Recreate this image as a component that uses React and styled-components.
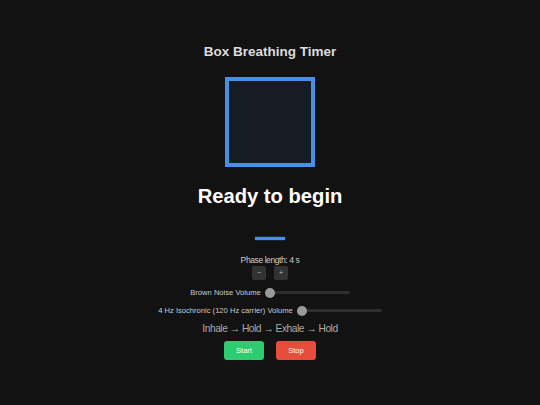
import React, { useState } from "react";
import styled, { createGlobalStyle } from "styled-components";

const Global = createGlobalStyle`
  html, body { margin: 0; padding: 0; background: #121212; }
  body { font-family: "Liberation Sans", Arial, sans-serif; color: #e0e0e0; }
  * { box-sizing: border-box; }
`;

const Page = styled.div`
  width: 540px;
  height: 405px;
  display: flex;
  flex-direction: column;
  align-items: center;
  padding-top: 44px;
`;

const Title = styled.h1`
  margin: 0;
  font-size: 13.5px;
  line-height: 16px;
  font-weight: bold;
  color: #dddddd;
`;

const Box = styled.div`
  margin-top: 17px;
  width: 90px;
  height: 90px;
  border: 4px solid #4a90e2;
  background: #161c24;
`;

const Phase = styled.div`
  margin-top: 16px;
  font-size: 20.2px;
  line-height: 26px;
  font-weight: bold;
  color: #ffffff;
`;

const Bar = styled.div`
  margin-top: 28px;
  width: 30px;
  height: 3px;
  background: #4a90e2;
  box-shadow: 0 0 2px rgba(74, 144, 226, 0.6);
`;

const SmallText = styled.div`
  margin-top: 15px;
  font-size: 8.6px;
  line-height: 10px;
  letter-spacing: -0.45px;
  color: #cccccc;
`;

const StepRow = styled.div`
  margin-top: 1px;
  display: flex;
  gap: 8px;
`;

const StepButton = styled.button`
  width: 14px;
  height: 14px;
  padding: 0;
  border: none;
  border-radius: 2px;
  background: #333333;
  color: #bbbbbb;
  font-family: "Liberation Sans", Arial, sans-serif;
  font-size: 7px;
  line-height: 14px;
  cursor: pointer;
`;

const SliderRow = styled.div`
  margin-top: ${(p) => p.$mt}px;
  display: flex;
  align-items: center;
  gap: 4px;
  font-size: 7.6px;
  color: #cccccc;
`;

const Track = styled.div`
  position: relative;
  width: 85px;
  height: 3px;
  border-radius: 2px;
  background: #2e2e2e;
`;

const Thumb = styled.div`
  position: absolute;
  left: 0;
  top: 50%;
  width: 10px;
  height: 10px;
  margin-top: -5px;
  border-radius: 50%;
  background: #9a9a9a;
`;

const Sequence = styled.div`
  margin-top: 8px;
  font-size: 10.2px;
  line-height: 12px;
  letter-spacing: -0.45px;
  color: #aaaaaa;
`;

const ButtonRow = styled.div`
  margin-top: 6px;
  display: flex;
  gap: 12px;
`;

const ActionButton = styled.button`
  width: 40px;
  height: 19px;
  padding: 0;
  border: none;
  border-radius: 3px;
  background: ${(p) => p.$bg};
  color: #ffffff;
  font-family: "Liberation Sans", Arial, sans-serif;
  font-size: 7.5px;
  cursor: pointer;
`;

function Slider({ label, mt }) {
  return (
    <SliderRow $mt={mt}>
      <span>{label}</span>
      <Track>
        <Thumb />
      </Track>
    </SliderRow>
  );
}

export default function App() {
  const [len, setLen] = useState(4);
  return (
    <>
      <Global />
      <Page>
        <Title>Box Breathing Timer</Title>
        <Box />
        <Phase>Ready to begin</Phase>
        <Bar />
        <SmallText>Phase length: {len} s</SmallText>
        <StepRow>
          <StepButton onClick={() => setLen((v) => Math.max(1, v - 1))}>−</StepButton>
          <StepButton onClick={() => setLen((v) => v + 1)}>+</StepButton>
        </StepRow>
        <Slider label="Brown Noise Volume" mt={8} />
        <Slider label="4 Hz Isochronic (120 Hz carrier) Volume" mt={9} />
        <Sequence>Inhale → Hold → Exhale → Hold</Sequence>
        <ButtonRow>
          <ActionButton $bg="#2ecc71">Start</ActionButton>
          <ActionButton $bg="#e74c3c">Stop</ActionButton>
        </ButtonRow>
      </Page>
    </>
  );
}
